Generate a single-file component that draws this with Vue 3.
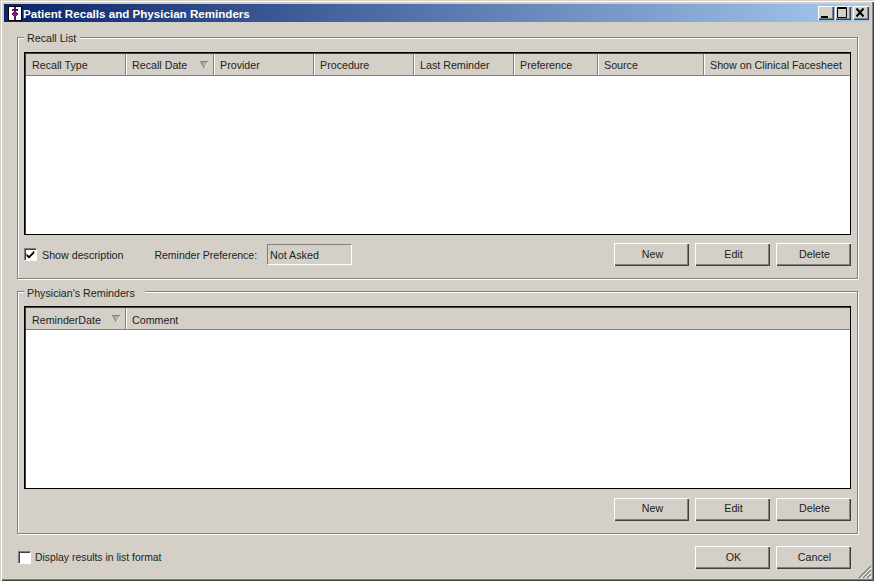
<script setup>
const recallCols = [
  { label: 'Recall Type', width: 100 },
  { label: 'Recall Date', width: 88, sort: true },
  { label: 'Provider', width: 100 },
  { label: 'Procedure', width: 100 },
  { label: 'Last Reminder', width: 100 },
  { label: 'Preference', width: 84 },
  { label: 'Source', width: 106 },
  { label: 'Show on Clinical Facesheet', width: 147 }
]
const reminderCols = [
  { label: 'ReminderDate', width: 100, sort: true },
  { label: 'Comment', width: 725 }
]
const actions = ['New', 'Edit', 'Delete']
</script>

<template>
  <div class="win">
    <div class="titlebar">
      <svg class="appicon" width="14" height="15" viewBox="0 0 14 15">
        <rect x="0.5" y="0.5" width="13" height="14" fill="#fff" stroke="#000" />
        <path d="M7 1v13M4 4h6M4 8h6" stroke="#5a1468" stroke-width="2" fill="none" />
        <rect x="5" y="6" width="4" height="4" fill="#7a2080" />
      </svg>
      <span class="title">Patient Recalls and Physician Reminders</span>
      <div class="winbtns">
        <button class="wb">
          <svg width="15" height="14" viewBox="0 0 15 14"><rect x="3" y="10" width="7" height="2" fill="#000" /></svg>
        </button>
        <button class="wb">
          <svg width="15" height="14" viewBox="0 0 15 14"><path d="M2.5 1.5h9v10h-9zM2 2.5h10" stroke="#000" fill="none" /></svg>
        </button>
        <button class="wb close">
          <svg width="15" height="14" viewBox="0 0 15 14"><path d="M3.5 2.5l7 8M10.5 2.5l-7 8" stroke="#000" stroke-width="2" fill="none" /></svg>
        </button>
      </div>
    </div>

    <section class="group first">
      <span class="legend">Recall List</span>
      <div class="list">
        <div class="head">
          <div v-for="c in recallCols" :key="c.label" class="col" :style="{ width: c.width + 'px' }">
            <span>{{ c.label }}</span>
            <svg v-if="c.sort" class="sort" width="9" height="8" viewBox="0 0 9 8">
              <path d="M0.5 0.5h8L4.5 7.5z" fill="#b4b0a8" stroke="#808080" stroke-width="1" />
              <path d="M8.5 0.5L4.5 7.5" stroke="#fff" fill="none" />
            </svg>
          </div>
        </div>
      </div>
      <div class="controls">
        <label class="check desc">
          <span class="box">
            <svg width="11" height="11" viewBox="0 0 11 11"><path d="M1.5 4.5l2.5 2.4L9.2 1.6v2.8L4 9.6 1.5 7.1z" fill="#000" /></svg>
          </span>
          <span>Show description</span>
        </label>
        <span class="pref-label">Reminder Preference:</span>
        <div class="pref">Not Asked</div>
        <div class="actions">
          <button v-for="a in actions" :key="a" class="btn">{{ a }}</button>
        </div>
      </div>
    </section>

    <section class="group second">
      <span class="legend">Physician's Reminders</span>
      <div class="list">
        <div class="head">
          <div v-for="c in reminderCols" :key="c.label" class="col" :style="{ width: c.width + 'px' }">
            <span>{{ c.label }}</span>
            <svg v-if="c.sort" class="sort" width="9" height="8" viewBox="0 0 9 8">
              <path d="M0.5 0.5h8L4.5 7.5z" fill="#b4b0a8" stroke="#808080" stroke-width="1" />
              <path d="M8.5 0.5L4.5 7.5" stroke="#fff" fill="none" />
            </svg>
          </div>
        </div>
      </div>
      <div class="controls lower">
        <div class="actions">
          <button v-for="a in actions" :key="a" class="btn">{{ a }}</button>
        </div>
      </div>
    </section>

    <footer class="footer">
      <label class="check wide">
        <span class="box"></span>
        <span>Display results in list format</span>
      </label>
      <div class="actions">
        <button class="btn">OK</button>
        <button class="btn">Cancel</button>
      </div>
    </footer>

    <svg class="grip" width="14" height="14" viewBox="0 0 14 14">
      <path d="M13 1L1 13M13 5L5 13M13 9L9 13" stroke="#808080" stroke-width="1.4" fill="none" />
      <path d="M13 3L3 13M13 7L7 13M13 11L11 13" stroke="#fff" stroke-width="1" fill="none" />
    </svg>
  </div>
</template>

<style scoped>
.win {
  position: relative;
  box-sizing: border-box;
  width: 874px;
  height: 581px;
  padding: 4px 4px 0;
  background: #d4d0c8;
  color: #222;
  font: 10.7px "Liberation Sans", Arial, sans-serif;
  box-shadow: inset 1px 1px 0 #d4d0c8, inset 2px 2px 0 #fff, inset -1px -1px 0 #404040, inset -2px -2px 0 #808080;
}
.titlebar {
  display: flex;
  align-items: center;
  height: 18px;
  background: linear-gradient(90deg, #0a246a, #a6caf0);
}
.appicon { margin-left: 4px; }
.title {
  margin-left: 1px;
  color: #fff;
  font-weight: bold;
  font-size: 11.6px;
}
.winbtns {
  display: flex;
  margin-left: auto;
  margin-right: 1px;
}
.wb {
  box-sizing: border-box;
  width: 16px;
  height: 14px;
  margin-left: 1px;
  padding: 0;
  border: 0;
  background: #d4d0c8;
  box-shadow: inset 1px 1px 0 #fff, inset -1px -1px 0 #404040, inset -2px -2px 0 #808080;
  display: block;
}
.wb svg { display: block; }
.wb.close { margin-left: 2px; }
.group {
  position: relative;
  box-sizing: border-box;
  width: 841px;
  margin-left: 13px;
  padding: 14px 6px 0;
  border: 1px solid #808080;
  box-shadow: inset 1px 1px 0 #fff, 1px 1px 0 #fff;
}
.first { height: 242px; margin-top: 15px; }
.second { height: 243px; margin-top: 12px; }
.legend {
  position: absolute;
  top: -7px;
  left: 6px;
  padding: 0 4px 0 3px;
  background: #d4d0c8;
  line-height: 14px;
}
.second .legend { top: -6px; padding-right: 10px; }
.list {
  box-sizing: border-box;
  width: 827px;
  height: 183px;
  background: #fff;
  border: 1px solid #000;
  box-shadow: inset 1px 1px 0 #404040;
}
.head {
  display: flex;
  height: 21px;
  margin-left: 1px;
  margin-top: 1px;
  background: #d4d0c8;
  border-bottom: 1px solid #808080;
  overflow: hidden;
}
.col {
  position: relative;
  flex: none;
  box-sizing: border-box;
  padding-left: 6px;
  line-height: 22px;
  white-space: nowrap;
  border-right: 1px solid #808080;
  box-shadow: 1px 0 0 #fff;
}
.second .col { line-height: 24px; }
.col:last-child { border-right: 0; box-shadow: none; }
.sort {
  position: absolute;
  right: 4px;
  top: 7px;
}
.controls {
  display: flex;
  align-items: center;
  height: 23px;
  margin-top: 8px;
}
.lower { justify-content: flex-end; margin-top: 9px; }
.check {
  display: flex;
  align-items: center;
}
.wide { font-size: 10.4px; }
.box {
  box-sizing: border-box;
  width: 13px;
  height: 13px;
  margin-right: 4px;
  background: #fff;
  border: 1px solid;
  border-color: #808080 #fff #fff #808080;
  box-shadow: inset 1px 1px 0 #404040;
  display: block;
}
.desc .box { margin-right: 5px; }
.box svg { display: block; }
.pref-label { margin-left: 31px; font-size: 10.5px; }
.pref {
  box-sizing: border-box;
  width: 85px;
  height: 21px;
  margin-left: 10px;
  padding-left: 2px;
  line-height: 20px;
  border: 1px solid;
  border-color: #808080 #fff #fff #808080;
}
.actions {
  display: flex;
  gap: 6px;
  margin-left: auto;
}
.btn {
  box-sizing: border-box;
  width: 75px;
  height: 23px;
  padding: 0 0 1px 2px;
  border: 0;
  background: #d4d0c8;
  color: #222;
  font: inherit;
  box-shadow: inset 1px 1px 0 #fff, inset -1px -1px 0 #404040, inset -2px -2px 0 #808080;
}
.lower .btn { padding-bottom: 3px; }
.footer {
  display: flex;
  align-items: center;
  width: 833px;
  height: 23px;
  margin-left: 14px;
  margin-top: 12px;
}
.footer .btn { font-size: 10.7px; }
.grip {
  position: absolute;
  right: 2px;
  bottom: 2px;
}
</style>

<style>
html, body { margin: 0; background: #d4d0c8; }
</style>
